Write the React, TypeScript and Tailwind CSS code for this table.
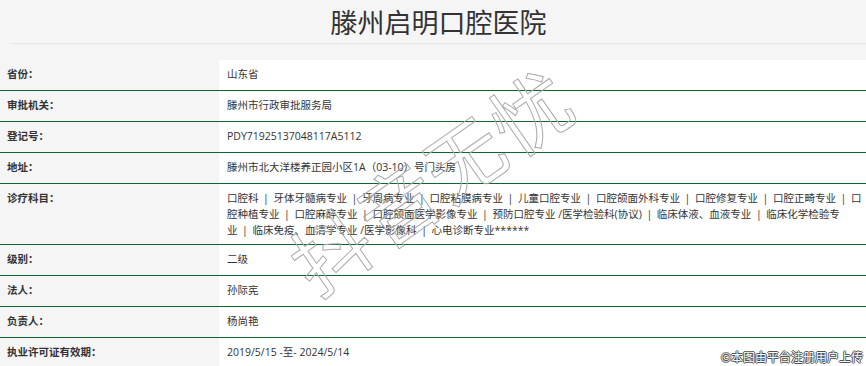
import React from 'react'

type Row = { label: string; value: React.ReactNode; multi?: boolean }

const Sep = () => <span className="inline-block w-[15px] text-center">|</span>

const line1 = ['口腔科', '牙体牙髓病专业', '牙周病专业', '口腔粘膜病专业', '儿童口腔专业', '口腔颌面外科专业', '口腔修复专业', '口腔正畸专业', '口']
const line2 = ['腔种植专业', '口腔麻醉专业', '口腔颌面医学影像专业', '预防口腔专业 /医学检验科(协议)', '临床体液、血液专业', '临床化学检验专']
const line3 = ['业', '临床免疫、血清学专业 /医学影像科', '心电诊断专业******']

function Joined({ parts }: { parts: string[] }) {
  return (
    <div className="whitespace-nowrap">
      {parts.map((p, i) => (
        <React.Fragment key={i}>
          {i > 0 && <Sep />}
          {p}
        </React.Fragment>
      ))}
    </div>
  )
}

const rows: Row[] = [
  { label: '省份：', value: '山东省' },
  { label: '审批机关：', value: '滕州市行政审批服务局' },
  { label: '登记号：', value: 'PDY71925137048117A5112' },
  { label: '地址：', value: '滕州市北大洋楼养正园小区1A（03-10）号门头房' },
  {
    label: '诊疗科目：',
    multi: true,
    value: (
      <>
        <Joined parts={line1} />
        <Joined parts={line2} />
        <Joined parts={line3} />
      </>
    ),
  },
  { label: '级别：', value: '二级' },
  { label: '法人：', value: '孙际宪' },
  { label: '负责人：', value: '杨尚艳' },
  { label: '执业许可证有效期：', value: '2019/5/15 -至- 2024/5/14' },
]

export default function App() {
  return (
    <div className="relative w-[866px] h-[366px] overflow-hidden bg-[#f5f5f5] text-[#333] font-['Open_Sans','Noto_Sans_CJK_SC',sans-serif]">
      <div className="ml-[11px] h-[44px] border-b border-[#e6e6e6] flex items-center justify-center">
        <h1 className="text-[27px] font-normal leading-none -mt-[1px] font-['Noto_Sans_CJK_SC',sans-serif]">滕州启明口腔医院</h1>
      </div>

      <div className="mt-[16px] text-[10.5px]">
        {rows.map(r => (
          <div key={r.label} className="flex border-b border-[#0f6532]">
            <div
              className={`w-[219px] shrink-0 pl-[7px] font-semibold ${
                r.multi ? 'py-[6px] leading-[16px]' : 'h-[30px] flex items-center'
              }`}
            >
              {r.label}
            </div>
            <div
              className={`flex-1 bg-white pl-[8px] overflow-hidden ${
                r.multi ? 'py-[6px] leading-[16px]' : 'h-[30px] flex items-center'
              }`}
            >
              {r.value}
            </div>
          </div>
        ))}
      </div>

      <div className="pointer-events-none absolute left-[430px] top-[178px] -translate-x-1/2 -translate-y-1/2 -rotate-[35deg] whitespace-nowrap text-[78px] font-normal leading-none tracking-[3px] text-transparent font-['Noto_Sans_CJK_SC',sans-serif] [-webkit-text-stroke:1px_#aaaaaa]">
        抖音无忧
      </div>

      <div className="pointer-events-none absolute right-[3px] bottom-[3px] text-[12px] leading-none text-white font-['Noto_Sans_CJK_SC',sans-serif] [text-shadow:0_0_1px_#444,1px_0_0_#555,-1px_0_0_#555,0_1px_0_#555,0_-1px_0_#555]">
        ©本图由平台注册用户上传
      </div>
    </div>
  )
}
